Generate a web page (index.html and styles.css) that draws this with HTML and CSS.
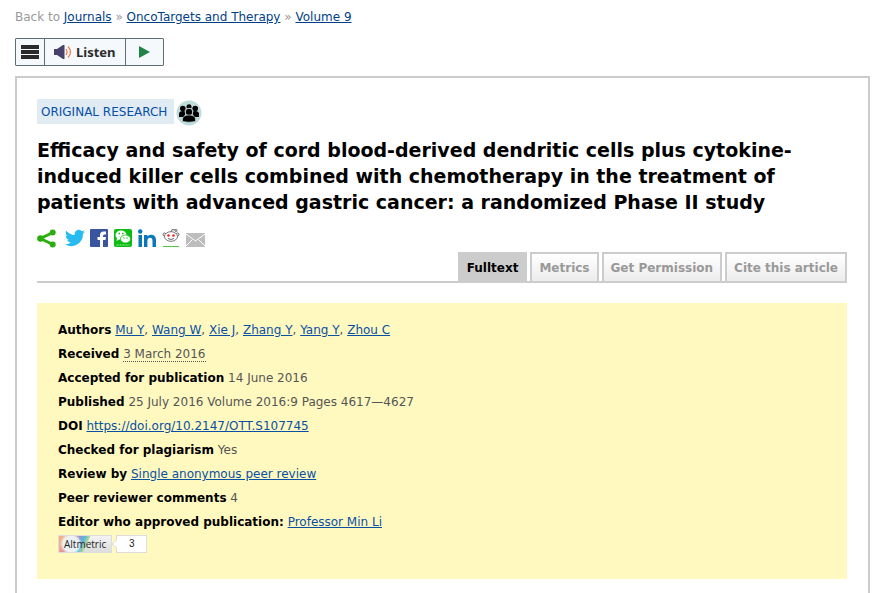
FILE: index.html
```html
<!DOCTYPE html>
<html lang="en">

<head>
    <meta charset="UTF-8">
    <meta name="viewport" content="width=device-width, initial-scale=1.0">
    <title>Efficacy and safety of cord blood-derived dendritic cells</title>
    <link rel="stylesheet" href="styles.css">
</head>

<body>
    <nav class="breadcrumb">
        Back to <a href="#">Journals</a> » <a href="#">OncoTargets and Therapy</a> » <a href="#">Volume 9</a>
    </nav>
    <div class="reader">
        <button type="button" class="reader-menu" aria-label="Menu">
            <svg width="18" height="14" viewBox="0 0 18 14" fill="#2b2b2b">
                <path d="M0 0h18v4H0zM0 5h18v4H0zM0 10h18v4H0z" />
            </svg>
        </button>
        <button type="button" class="reader-listen">
            <svg width="18" height="14" viewBox="0 0 18 14">
                <path d="M0 4h3l6-4h1.500v14H9l-6-4H0z" fill="#47416b" />
                <path d="M12 4q2 3 0 6M14 1.500q5 5.500 0 11" fill="none" stroke="#f08050" stroke-width="1.300" />
            </svg>
            Listen
        </button>
        <button type="button" class="reader-play" aria-label="Play">
            <svg width="12" height="14" viewBox="0 0 12 14">
                <path d="M1 1l11 6-11 6z" fill="#208447" />
            </svg>
        </button>
    </div>
    <main class="article">
        <div class="article-type">
            <span class="type-label">ORIGINAL RESEARCH</span>
            <svg class="type-icon" width="26" height="26" viewBox="0 0 26 26">
                <circle cx="13" cy="13" r="12.500" fill="#bfdcdc" />
                <circle cx="6.800" cy="8.500" r="2.800" />
                <circle cx="13" cy="6.800" r="2.500" />
                <circle cx="19.200" cy="8.500" r="2.800" />
                <path d="M3 17v-3q0-3 4-3 2 0 3 1l-2 5zM23 17v-3q0-3-4-3-2 0-3 1l2 5z" />
                <circle cx="13" cy="12" r="3.800" stroke="#bfdcdc" />
                <path d="M6.500 21.500v-2q0-4.500 6.500-4.500t6.500 4.500v2q-6.500 1.500-13 0z" stroke="#bfdcdc" stroke-width=".7" />
            </svg>
        </div>
        <h1>Efficacy and safety of cord blood-derived dendritic cells plus cytokine-<wbr>induced killer cells combined with
            chemotherapy in the treatment of <br>patients with advanced gastric cancer: a randomized Phase II study</h1>
        <div class="share">
            <a href="#" class="share-all" aria-label="Share">
                <svg width="19" height="19" viewBox="0 0 19 19">
                    <path d="M16 3.500L3.500 9.500 16 15.500" fill="none" stroke="#2bae0d" stroke-width="3" />
                    <circle cx="3.500" cy="9.500" r="3.300" fill="#2bae0d" />
                    <circle cx="15.700" cy="3.500" r="3" fill="#2bae0d" />
                    <circle cx="15.700" cy="15.500" r="3" fill="#2bae0d" />
                </svg>
            </a>
            <a href="#" aria-label="Twitter">
                <svg width="20" height="20" viewBox="0 0 24 24">
                    <path fill="#28bbf0" d="M23.900 4.600a10 10 0 0 1-2.800.8 5 5 0 0 0 2.100-2.700c-1 .6-2 1-3.100 1.200a4.900 4.900 0 0 0-8.400 4.500A14 14 0 0 1 1.700 3.200a4.900 4.900 0 0 0 1.500 6.500 5 5 0 0 1-2.200-.6v.1a4.900 4.900 0 0 0 3.900 4.800 5 5 0 0 1-2.200.1 4.900 4.900 0 0 0 4.600 3.400A9.900 9.900 0 0 1 0 19.500 14 14 0 0 0 21.500 7.100c1-.7 1.800-1.600 2.400-2.500z" />
                </svg>
            </a>
            <a href="#" aria-label="Facebook">
                <svg width="20" height="20" viewBox="0 0 20 20">
                    <rect x="1" y="1" width="18" height="18" rx="1" fill="#3a559f" />
                    <path d="M11 19v-7H8.500V9H11V7q0-3.500 3.500-3.500H17v3h-1.500q-1.500 0-1.500 1.500v1h3l-.5 3H14v7z" fill="#fff" />
                </svg>
            </a>
            <a href="#" aria-label="WeChat">
                <svg width="20" height="20" viewBox="0 0 20 20">
                    <rect x="1" y="1" width="18" height="18" rx="2" fill="#0cbc12" />
                    <ellipse cx="8" cy="7" rx="5.500" ry="4.500" fill="#fff" />
                    <path d="M4 10l-.5 3L7 11z" fill="#fff" />
                    <ellipse cx="12.500" cy="11" rx="5" ry="4" fill="#fff" stroke="#0cbc12" stroke-width=".8" />
                    <path d="M5.500 5.500h1.500M9 5.500h1.500M10.500 10h1M13.500 10h1" stroke="#0cbc12" stroke-width="1.500" />
                    <path d="M3.500 17h13" stroke="#a5e9a7" stroke-dasharray="2 1" />
                </svg>
            </a>
            <a href="#" aria-label="LinkedIn">
                <svg width="20" height="20" viewBox="0 0 20 20" fill="#0977b9">
                    <circle cx="3.200" cy="3.500" r="2.200" />
                    <path d="M1.500 7H5v12H1.500zM7 7h3.400v1.600Q11.500 6.700 14 6.700q5 0 5 5.500V19h-3.500v-6q0-3.200-2.500-3.200t-2.600 3.200v6H7z" />
                </svg>
            </a>
            <a href="#" aria-label="Reddit">
                <svg width="20" height="20" viewBox="0 0 20 20">
                    <circle cx="3.500" cy="6.500" r="1.500" fill="#fff" stroke="#444" stroke-width=".8" />
                    <circle cx="16.500" cy="6.500" r="1.500" fill="#fff" stroke="#444" stroke-width=".8" />
                    <path d="M10 4l1-2.500 3.500.5" fill="none" stroke="#444" stroke-width=".8" />
                    <circle cx="15" cy="2.500" r="1" fill="#fff" stroke="#444" stroke-width=".8" />
                    <ellipse cx="10" cy="8.500" rx="6.500" ry="4.800" fill="#fff" stroke="#555" stroke-width=".8" />
                    <circle cx="7.500" cy="7.500" r="1.300" fill="#f22" />
                    <circle cx="12.500" cy="7.500" r="1.300" fill="#f22" />
                    <path d="M7 10.500q3 2 6 0" fill="none" stroke="#444" stroke-width=".8" />
                    <path d="M2 18.500h16" stroke="#4ccb3e" />
                </svg>
            </a>
            <a href="#" aria-label="Email">
                <svg width="20" height="20" viewBox="0 0 20 20">
                    <path d="M1 5h19v14H1z" fill="#bdbdbd" />
                    <path d="M1 6l9.500 7L20 6M1 18l6-6M20 18l-6-6" fill="none" stroke="#fff" />
                </svg>
            </a>
        </div>
        <nav class="tabs">
            <a href="#" class="tab active">Fulltext</a>
            <a href="#" class="tab">Metrics</a>
            <a href="#" class="tab">Get Permission</a>
            <a href="#" class="tab">Cite this article</a>
        </nav>
        <section class="intro">
            <p><b>Authors</b> <a href="#">Mu Y</a>, <a href="#">Wang W</a>, <a href="#">Xie J</a>, <a href="#">Zhang Y</a>, <a href="#">Yang Y</a>, <a href="#">Zhou C</a></p>
            <p><b>Received</b> <span class="date">3 March 2016</span></p>
            <p><b>Accepted for publication</b> 14 June 2016</p>
            <p><b>Published</b> 25 July 2016 Volume 2016:9 Pages 4617—4627</p>
            <p><b>DOI</b> <a href="#">https://doi.org/10.2147/OTT.S107745</a></p>
            <p><b>Checked for plagiarism</b> Yes</p>
            <p><b>Review by</b> <a href="#">Single anonymous peer review</a></p>
            <p><b>Peer reviewer comments</b> 4</p>
            <p><b>Editor who approved publication:</b> <a href="#">Professor Min Li</a></p>
            <a href="#" class="altmetric">
                <span class="altmetric-name">Altmetric</span>
                <span class="altmetric-score">3</span>
            </a>
        </section>
    </main>
</body>

</html>
```
FILE: styles.css
```css
body {
    margin: 0;
    padding: 8px 19px 0 15px;
    background: #fff;
    color: #555;
    font: 12px/18px Verdana, "DejaVu Sans", sans-serif;
}

a {
    color: #0750a4;
}

.breadcrumb {
    color: #999;
}

.breadcrumb a {
    color: #003e86;
}

/* read aloud bar */
.reader {
    display: flex;
    width: max-content;
    margin: 12px 0 10px;
    border: 1px solid #5f6e74;
    border-radius: 1px;
}

.reader button {
    display: flex;
    align-items: center;
    justify-content: center;
    gap: 4px;
    height: 26px;
    margin: 0;
    border: 0;
    background: #f5f9fc;
    color: #2b2b2b;
    font: bold 13px "Noto Sans", "Open Sans", sans-serif;
    cursor: pointer;
}

.reader button + button {
    border-left: 1px solid #5f6e74;
}

.reader .reader-menu {
    padding: 0 5px;
}

.reader .reader-listen {
    padding: 0 9px;
}

.reader .reader-play {
    padding: 0 13px 0 12px;
}

.article {
    padding: 21px 21px 30px 20px;
    border: 2px solid #ccc;
}

.article-type {
    display: flex;
    align-items: flex-start;
    gap: 2px;
}

.type-label {
    padding: 5px 7px 3px 4px;
    background: #e1ebf4;
    color: #0750a4;
    line-height: 17px;
}

.type-icon {
    margin-top: 1px;
}

h1 {
    margin: 11px 0 13px;
    color: #000;
    font-size: 19px;
    line-height: 26px;
}

.share {
    display: flex;
    align-items: center;
    gap: 4px;
}

.share a {
    display: flex;
}

.share .share-all {
    margin-right: 5px;
}

.tabs {
    display: flex;
    justify-content: flex-end;
    gap: 3px;
    margin-top: 4px;
    border-bottom: 2px solid #ccc;
}

.tab {
    padding: 6px 7px 4px;
    border: 2px solid #ccc;
    border-bottom: 0;
    background: linear-gradient(#fff, #ececec);
    color: #999;
    font-weight: bold;
    line-height: 17px;
    text-decoration: none;
}

.tab.active {
    background: #ccc;
    color: #000;
}

.intro {
    margin-top: 20px;
    padding: 15px 21px 26px;
    background: #fff9c0;
}

.intro p {
    margin: 0;
    line-height: 24px;
}

.intro b {
    color: #000;
}

.date {
    border-bottom: 1px dotted #555;
}

/* altmetric badge */
.altmetric {
    display: flex;
    gap: 4px;
    width: max-content;
    margin-top: 1px;
    color: #222;
    font-size: 10px;
    line-height: 16px;
    text-decoration: none;
}

.altmetric-name {
    padding: 0 5px;
    border: 1px solid #ddd;
    background:
        radial-gradient(circle at 12px 8px, #eef1f4 8px, transparent 11px),
        linear-gradient(115deg, #f3b183 5px, #c977a5 14px, #58b8e0 24px, #b6d98c 28px, transparent 29px),
        linear-gradient(#f4f4f4, #ddd);
    font-family: "Open Sans", "Noto Sans", sans-serif;
}

.altmetric-score {
    position: relative;
    width: 29px;
    border: 1px solid #ddd;
    background: #fff;
    font-family: "Liberation Sans", Arial, sans-serif;
    text-align: center;
}

.altmetric-score::before {
    content: "";
    position: absolute;
    top: 5px;
    left: -4px;
    width: 5px;
    height: 5px;
    border: 1px solid #ddd;
    border-width: 0 0 1px 1px;
    background: #fff;
    transform: rotate(45deg);
}
```
